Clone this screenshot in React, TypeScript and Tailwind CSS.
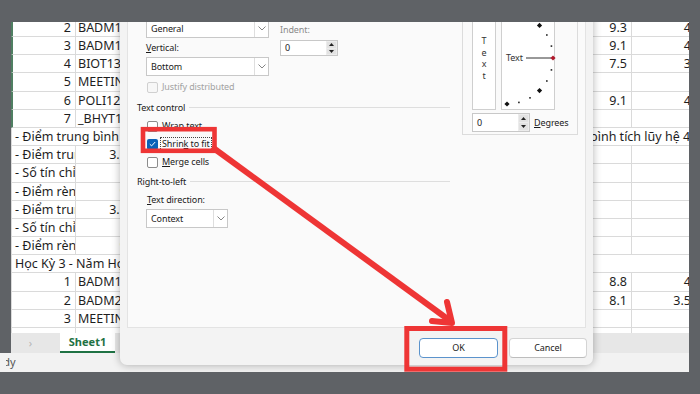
import React from "react";

type Row =
  | { t: "d"; a?: string; b?: string; d?: string; e?: string; sel?: boolean }
  | { t: "l"; a: string; b?: string }
  | { t: "o"; a: string; r?: string };

const rows: Row[] = [
  { t: "d", a: "2", b: "BADM1101", d: "9.3", e: "4", sel: true },
  { t: "d", a: "3", b: "BADM1102", d: "9.1", e: "4", sel: true },
  { t: "d", a: "4", b: "BIOT1301", d: "7.5", e: "3", sel: true },
  { t: "d", a: "5", b: "MEETING1", sel: true },
  { t: "d", a: "6", b: "POLI1201", d: "9.1", e: "4", sel: true },
  { t: "d", a: "7", b: "_BHYT1", sel: true },
  { t: "o", a: "- Điểm trung bình học kỳ hệ 10:", r: "bình tích lũy hệ 4:" },
  { t: "l", a: "- Điểm trung bình học kỳ hệ 4:", b: "3.55" },
  { t: "l", a: "- Số tín chỉ đạt học kỳ:", b: "17" },
  { t: "l", a: "- Điểm rèn luyện học kỳ:", b: "90" },
  { t: "l", a: "- Điểm trung bình tích lũy hệ 4:", b: "3.55" },
  { t: "l", a: "- Số tín chỉ tích lũy:", b: "17" },
  { t: "l", a: "- Điểm rèn luyện tích lũy:", b: "90" },
  { t: "o", a: "Học Kỳ 3 - Năm Học 2022-2023" },
  { t: "d", a: "1", b: "BADM1201", d: "8.8", e: "4" },
  { t: "d", a: "2", b: "BADM2301", d: "8.1", e: "3.5" },
  { t: "d", a: "3", b: "MEETING2" },
  { t: "d" },
];

function SheetRow({ row }: { row: Row }) {
  if (row.t === "o") {
    return (
      <div className="flex h-[18.2px] shrink-0 items-center whitespace-nowrap border-b border-l border-[#dadada] leading-[18px]">
        <span className="w-[578px] shrink-0 overflow-hidden pl-[3px]">{row.a}</span>
        {row.r && <span>{row.r}</span>}
      </div>
    );
  }
  if (row.t === "l") {
    return (
      <div className="flex h-[18.2px] shrink-0 whitespace-nowrap leading-[18px]">
        <div className="w-[65px] shrink-0 overflow-hidden border-b border-l border-r border-[#dadada] pl-[3px]">{row.a}</div>
        <div className="w-[64px] shrink-0 border-b border-r border-[#dadada] pr-[5px] text-right">{row.b}</div>
        <div className="w-[310px] shrink-0 border-b border-r border-[#dadada]" />
        <div className="w-[182px] shrink-0 border-b border-r border-[#dadada]" />
        <div className="w-[62px] shrink-0 border-b border-r border-[#dadada]" />
      </div>
    );
  }
  return (
    <div className="flex h-[18.2px] shrink-0 whitespace-nowrap leading-[18px]">
      <div
        className={
          row.sel
            ? "w-[65px] shrink-0 border-b border-l-2 border-r border-[#dadada] border-l-[#4f7f62] pr-[4px] text-right"
            : "w-[65px] shrink-0 border-b border-l border-r border-[#dadada] pr-[4px] text-right"
        }
      >
        {row.a}
      </div>
      <div className="w-[64px] shrink-0 border-b border-r border-[#dadada] pl-[2px]">{row.b}</div>
      <div className="w-[310px] shrink-0 border-b border-r border-[#dadada]" />
      <div className="w-[182px] shrink-0 border-b border-r border-[#dadada] pr-[4px] text-right">{row.d}</div>
      <div className="w-[62px] shrink-0 border-b border-r border-[#dadada] pr-[2px] text-right">{row.e}</div>
    </div>
  );
}

function Chevron() {
  return (
    <svg width="8" height="5" viewBox="0 0 8 5">
      <path d="M0.5 0.5 L4 4 L7.5 0.5" fill="none" stroke="#777" strokeWidth="0.9" />
    </svg>
  );
}

function Dropdown({ cls, label }: { cls: string; label: string }) {
  return (
    <div className={cls}>
      <div className="flex flex-1 items-center pl-[4px]">{label}</div>
      <div className="flex w-[14px] items-center justify-center border-l border-[#dedede]">
        <Chevron />
      </div>
    </div>
  );
}

function Spinner({ cls }: { cls: string }) {
  return (
    <div className={cls}>
      <div className="flex flex-1 items-center pl-[4px]">0</div>
      <div className="flex w-[11px] flex-col gap-[1px] bg-[#ececec] p-[1px]">
        <div className="flex flex-1 items-center justify-center bg-[#e2e2e2]">
          <svg width="5" height="3" viewBox="0 0 5 3">
            <path d="M0 3 L2.5 0 L5 3 Z" fill="#222" />
          </svg>
        </div>
        <div className="flex flex-1 items-center justify-center bg-[#e2e2e2]">
          <svg width="5" height="3" viewBox="0 0 5 3">
            <path d="M0 0 L2.5 3 L5 0 Z" fill="#222" />
          </svg>
        </div>
      </div>
    </div>
  );
}

function Box({ checked, disabled }: { checked?: boolean; disabled?: boolean }) {
  if (checked) {
    return (
      <div className="flex h-[11px] w-[11px] shrink-0 items-center justify-center rounded-[2px] bg-[#0a62b8]">
        <svg width="7" height="6" viewBox="0 0 7 6">
          <path d="M0.8 3.2 L2.6 4.9 L6.2 1" fill="none" stroke="#fff" strokeWidth="1" />
        </svg>
      </div>
    );
  }
  return (
    <div
      className={
        disabled
          ? "h-[11px] w-[11px] shrink-0 rounded-[2px] border border-[#d0d0d0] bg-[#f7f7f7]"
          : "h-[11px] w-[11px] shrink-0 rounded-[2px] border border-[#8c8c8c] bg-white"
      }
    />
  );
}

function Header({ label }: { label: string }) {
  return (
    <div className="flex h-[19px] items-center">
      <span>{label}</span>
      <div className="ml-[4px] mr-[12px] h-px flex-1 bg-[#dedede]" />
    </div>
  );
}

function ArcDots() {
  const cx = 5;
  const cy = 49;
  const r = 46;
  const dots: React.ReactNode[] = [];
  for (let i = 0; i <= 12; i++) {
    const ang = 90 - i * 15;
    const rad = (ang * Math.PI) / 180;
    const x = cx + r * Math.cos(rad);
    const y = cy - r * Math.sin(rad);
    if (ang === 0) {
      dots.push(<path key={i} d={`M${x} ${y - 2.6} L${x + 2.6} ${y} L${x} ${y + 2.6} L${x - 2.6} ${y} Z`} fill="#b0182b" />);
    } else if (ang % 45 === 0) {
      dots.push(<path key={i} d={`M${x} ${y - 2.6} L${x + 2.6} ${y} L${x} ${y + 2.6} L${x - 2.6} ${y} Z`} fill="#111" />);
    } else {
      dots.push(<rect key={i} x={x - 0.8} y={y - 0.8} width="1.6" height="1.6" fill="#222" />);
    }
  }
  return (
    <svg className="absolute left-0 top-0" width="54" height="102" viewBox="0 0 54 102">
      <line x1="24" y1="49" x2="49" y2="49" stroke="#333" strokeWidth="1" />
      {dots}
    </svg>
  );
}

function Dialog() {
  return (
    <div className="absolute left-[120px] top-[-14px] flex h-[357px] w-[473px] flex-col rounded-b-[7px] bg-[#f3f3f3] font-['Noto_Sans',sans-serif] text-[9px] tracking-[-0.1px] text-[#1b1b1b] shadow-[0_0_9px_rgba(0,0,0,0.3)]">
      <div className="mx-[7px] flex h-[320px] border border-t-0 border-[#e3e3e3] bg-[#fafafa]">
        <div className="w-[334px] shrink-0 pl-[9px] pt-[11px]">
          <div className="flex">
            <div className="ml-[9px] w-[123px]">
              <Dropdown cls="flex h-[19px] border border-[#c8c8c8] bg-white" label="General" />
              <div className="h-[19px] leading-[19px]">
                <u className="underline-offset-[1px]">V</u>ertical:
              </div>
              <Dropdown cls="flex h-[19px] border border-[#c8c8c8] bg-white" label="Bottom" />
            </div>
            <div className="ml-[11px] pt-[4px]">
              <div className="h-[14px] leading-[14px] text-[#8a8a8a]">Indent:</div>
              <Spinner cls="mt-[3px] flex h-[16px] w-[58px] border border-[#c8c8c8] bg-white" />
            </div>
          </div>
          <div className="ml-[10px] flex h-[22px] items-center gap-[4px] text-[#a3a3a3]">
            <Box disabled />
            <span>Justify distributed</span>
          </div>
          <Header label="Text control" />
          <div className="ml-[10px] flex h-[18px] items-center gap-[4px]">
            <Box />
            <span>
              <u className="underline-offset-[1px]">W</u>rap text
            </span>
          </div>
          <div className="ml-[10px] flex h-[18px] items-center gap-[2px]">
            <Box checked />
            <span className="border border-dotted border-[#444] px-[1px] leading-[12px]">
              Shrin<u className="underline-offset-[1px]">k</u> to fit
            </span>
          </div>
          <div className="ml-[10px] flex h-[18px] items-center gap-[4px]">
            <Box />
            <span>
              <u className="underline-offset-[1px]">M</u>erge cells
            </span>
          </div>
          <div className="h-[1px]" />
          <Header label="Right-to-left" />
          <div className="ml-[10px] h-[18px] leading-[18px]">
            <u className="underline-offset-[1px]">T</u>ext direction:
          </div>
          <Dropdown cls="ml-[9px] flex h-[19px] w-[82px] border border-[#c8c8c8] bg-white" label="Context" />
        </div>
        <div className="h-[127px] w-[116px] shrink-0 border-x border-b border-[#dcdcdc] pl-[9px]">
          <div className="flex h-[102px] gap-[5px]">
            <div className="flex w-[24px] flex-col items-center border border-[#cfcfcf] bg-white pt-[26px] leading-[11.7px] text-[#333]">
              <span>T</span>
              <span>e</span>
              <span>x</span>
              <span>t</span>
            </div>
            <div className="relative w-[54px] border border-[#cfcfcf] bg-white">
              <ArcDots />
              <span className="absolute left-[4px] top-[43px] leading-[12px] text-[#333]">Text</span>
            </div>
          </div>
          <div className="mt-[3px] flex h-[19px] items-center">
            <Spinner cls="flex h-[19px] w-[58px] border border-[#c8c8c8] bg-white" />
            <span className="ml-[4px]">
              <u className="underline-offset-[1px]">D</u>egrees
            </span>
          </div>
        </div>
      </div>
      <div className="flex flex-1 items-start justify-end gap-[11px] pr-[6px] pt-[10px]">
        <div className="flex h-[20px] w-[79px] items-center justify-center rounded-[4px] border border-[#5b93cc] bg-white">OK</div>
        <div className="flex h-[20px] w-[78px] items-center justify-center rounded-[4px] border border-[#d4d4d4] border-b-[#bdbdbd] bg-white">Cancel</div>
      </div>
    </div>
  );
}

export default function App() {
  return (
    <div className="relative h-[394px] w-[700px] overflow-hidden bg-[#5f6266]">
      <div className="relative mt-[22px] flex h-[350px] w-[689px] flex-col overflow-hidden">
        <div className="flex h-[311px] shrink-0">
          <div className="w-[11px] shrink-0 bg-[#5f6266]" />
          <div className="flex flex-1 flex-col overflow-hidden bg-white font-['Noto_Sans',sans-serif] text-[12.5px] text-[#1e1e1e]">
            <div className="-mt-[3.2px] flex flex-col">
              {rows.map((r, i) => (
                <SheetRow key={i} row={r} />
              ))}
            </div>
          </div>
        </div>
        <div className="flex h-[20px] shrink-0">
          <div className="w-[11px] shrink-0 bg-[#5f6266]" />
          <div className="flex flex-1 bg-[#e7e7e7]">
            <div className="flex w-[49px] items-center justify-center pr-[10px] text-[11px] text-[#b5b5b5]">›</div>
            <div className="flex w-[55px] flex-col items-center justify-center border-b-2 border-[#1f7244] bg-white font-['Noto_Sans',sans-serif] text-[11px] font-bold text-[#1f7244]">
              Sheet1
            </div>
          </div>
        </div>
        <div className="flex h-[19px] shrink-0 items-center bg-[#f2f2f2] pl-[6px] font-['Noto_Sans',sans-serif] text-[11px] text-[#555]">
          <div className="overflow-hidden whitespace-nowrap">
            <span className="-ml-[22px] inline-block">Ready</span>
          </div>
        </div>
        <Dialog />
      </div>
      <svg className="pointer-events-none absolute left-0 top-0" width="700" height="394" viewBox="0 0 700 394">
        <rect x="143" y="129.2" width="71.5" height="21.6" fill="none" stroke="#ee3535" strokeWidth="4.6" />
        <rect x="406.8" y="328.5" width="98" height="40.7" fill="none" stroke="#ee3535" strokeWidth="5" />
        <line x1="212" y1="147" x2="449" y2="320" stroke="#ee3535" strokeWidth="6" />
        <path d="M432 321 L452 323 L447 302" fill="none" stroke="#ee3535" strokeWidth="6" strokeLinecap="round" strokeLinejoin="round" />
      </svg>
    </div>
  );
}
